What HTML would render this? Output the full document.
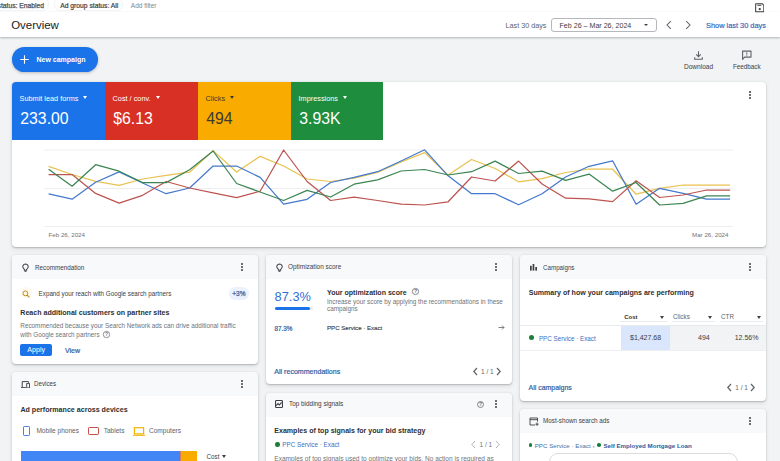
<!DOCTYPE html>
<html><head><meta charset="utf-8">
<style>
*{box-sizing:border-box;margin:0;padding:0}
html,body{width:780px;height:461px;overflow:hidden}
body{background:#f1f3f4;font-family:"Liberation Sans",sans-serif;color:#3c4043;position:relative}
.a{position:absolute;white-space:nowrap;line-height:1}
.card{position:absolute;background:#fff;border-radius:4px;box-shadow:0 1px 1.5px rgba(60,64,67,.25),0 1.5px 4px rgba(60,64,67,.12),0 0 1px rgba(60,64,67,.12);overflow:hidden}
.ch{position:absolute;left:0;top:0;width:100%;background:#f8f9fa}
.kebab{position:absolute;width:2px;height:8px}
.kebab i{position:absolute;left:0;width:2px;height:2px;border-radius:1px;background:#3c4043}
.tile{position:absolute;top:0;height:58.3px}
.tri{display:inline-block;width:0;height:0;border-left:2.6px solid transparent;border-right:2.6px solid transparent;border-top:3px solid currentColor;vertical-align:middle;margin-left:5px;position:relative;top:-1px}
</style></head><body>

<div class="a" style="left:0;top:0;width:780px;height:12px;background:#fff"></div>
<div class="a" style="left:-20px;top:-2px;width:69px;height:13px;border:1px solid #f1f3f4;border-radius:6px"></div>
<div class="a" style="left:53.7px;top:-2px;width:69.5px;height:13px;border:1px solid #f1f3f4;border-radius:6px"></div>
<div class="a" style="left:-2.5px;top:3.09px;font-size:6.75px;color:#4d5156;font-weight:normal;-webkit-text-stroke:0.25px #4d5156">status: Enabled</div>
<div class="a" style="left:60.2px;top:3.09px;font-size:6.75px;color:#3c4043;font-weight:normal;-webkit-text-stroke:0.2px #3c4043">Ad group status: All</div>
<div class="a" style="left:130.8px;top:3.21px;font-size:6.50px;color:#80868b;font-weight:normal;">Add filter</div>
<svg class="a" style="left:754.9px;top:3px;z-index:2" width="9.5" height="9.5" viewBox="0 0 10 10"><path d="M0.7 0.7 H7.6 L9.3 2.4 V9.3 H0.7 Z" stroke="#3c4043" stroke-width="1.1" fill="none" stroke-linejoin="round"/><path d="M2.6 2.4 H6.6" stroke="#3c4043" stroke-width="1.1"/><circle cx="5" cy="6.4" r="1.2" fill="#3c4043"/></svg>
<div class="a" style="left:0;top:12px;width:780px;height:25px;background:#fff;box-shadow:0 1px 2px rgba(60,64,67,.35)"></div>
<div class="a" style="left:11.2px;top:19.99px;font-size:11.45px;color:#202124;font-weight:normal;">Overview</div>
<div class="a" style="left:505.6px;top:22.47px;font-size:7.20px;color:#5f6368;font-weight:normal;">Last 30 days</div>
<div class="a" style="left:550.6px;top:18.2px;width:106px;height:13.8px;border:1px solid #b4b8bc;border-radius:3px"></div>
<div class="a" style="left:559.5px;top:22.52px;font-size:7.10px;color:#3c4043;font-weight:normal;">Feb 26 – Mar 26, 2024</div>
<div class="a" style="left:643.5px;top:24px;width:0;height:0;border-left:2.5px solid transparent;border-right:2.5px solid transparent;border-top:2.5px solid #3c4043"></div>
<svg class="a" style="left:664px;top:19.5px" width="9" height="10" viewBox="0 0 9 10"><path d="M6.8 1.2 L3 5 L6.8 8.8" stroke="#5f6368" stroke-width="1.05" fill="none"/></svg>
<svg class="a" style="left:684px;top:19.5px" width="9" height="10" viewBox="0 0 9 10"><path d="M2.2 1.2 L6 5 L2.2 8.8" stroke="#5f6368" stroke-width="1.05" fill="none"/></svg>
<div class="a" style="left:706.0px;top:22.37px;font-size:7.40px;color:#2b63b8;font-weight:normal;-webkit-text-stroke:0.15px #2b63b8;">Show last 30 days</div>
<div class="a" style="left:12px;top:47.3px;width:86px;height:24.6px;border-radius:12.3px;background:#1a73e8;box-shadow:0 1px 3px rgba(60,64,67,.3)"></div>
<svg class="a" style="left:19.5px;top:54.5px" width="9" height="9" viewBox="0 0 9 9"><path d="M4.5 0.3V8.7M0.3 4.5H8.7" stroke="#fff" stroke-width="1.1"/></svg>
<div class="a" style="left:36.5px;top:56.07px;font-size:7.00px;color:#fff;font-weight:bold;">New campaign</div>
<svg class="a" style="left:694px;top:50.5px" width="9" height="9" viewBox="0 0 9 9"><path d="M4.5 0.3 V5.6 M2.2 3.4 L4.5 5.7 L6.8 3.4" stroke="#5f6368" stroke-width="1.1" fill="none"/><path d="M0.7 6.3 V8.2 H8.3 V6.3" stroke="#5f6368" stroke-width="1.1" fill="none"/></svg>
<div class="a" style="left:684.0px;top:64.09px;font-size:6.55px;color:#3c4043;font-weight:normal;">Download</div>
<svg class="a" style="left:741.3px;top:49.8px" width="11" height="10" viewBox="0 0 11 10"><path d="M1.6 9.3 V1.1 H10 V7.1 H3.6 Z" stroke="#5f6368" stroke-width="1.1" fill="none" stroke-linejoin="round"/><path d="M5.8 2.4 V4.6 M5.8 5.4 V6.2" stroke="#5f6368" stroke-width="1"/></svg>
<div class="a" style="left:733.0px;top:64.21px;font-size:6.30px;color:#3c4043;font-weight:normal;">Feedback</div>
<div class="card" style="left:12px;top:81.5px;width:754px;height:165.7px">
<div class="tile" style="left:0px;width:93px;background:#1a73e8"></div>
<div class="a" style="left:7.6px;top:13.42px;font-size:7.30px;color:#fff;font-weight:normal;">Submit lead forms<span class="tri"></span></div>
<div class="a" style="left:8.3px;top:29.86px;font-size:15.80px;color:#fff;font-weight:normal;">233.00</div>
<div class="tile" style="left:93px;width:93px;background:#d93025"></div>
<div class="a" style="left:100.6px;top:13.42px;font-size:7.30px;color:#fff;font-weight:normal;">Cost / conv.<span class="tri"></span></div>
<div class="a" style="left:101.3px;top:29.86px;font-size:15.80px;color:#fff;font-weight:normal;">$6.13</div>
<div class="tile" style="left:186px;width:93px;background:#f9ab00"></div>
<div class="a" style="left:193.6px;top:13.42px;font-size:7.30px;color:#3c3a33;font-weight:normal;">Clicks<span class="tri"></span></div>
<div class="a" style="left:194.3px;top:29.86px;font-size:15.80px;color:#3c3a33;font-weight:normal;">494</div>
<div class="tile" style="left:279px;width:92px;background:#1e8e3e"></div>
<div class="a" style="left:286.6px;top:13.42px;font-size:7.30px;color:#fff;font-weight:normal;">Impressions<span class="tri"></span></div>
<div class="a" style="left:287.3px;top:29.86px;font-size:15.80px;color:#fff;font-weight:normal;">3.93K</div>
<div class="kebab" style="left:737.0px;top:9.0px"><i style="top:0"></i><i style="top:3px"></i><i style="top:6px"></i></div>
<div class="a" style="left:36.5px;top:150.46px;font-size:6.20px;color:#6f7377;font-weight:normal;">Feb 26, 2024</div>
<div class="a" style="left:680.0px;top:150.46px;font-size:6.20px;color:#6f7377;font-weight:normal;">Mar 26, 2024</div>
</div>
<svg class="a" style="left:0;top:0" width="780" height="461"><path d="M44 150H733M44 188.5H733M44 226.5H733" stroke="#eceef0" stroke-width="1" fill="none"/>
<polyline points="48.6,166.4 72.1,174.5 95.6,181.4 119.1,185.3 142.6,179.0 166.1,175.4 189.6,172.2 213.1,150.6 236.6,172.0 260.1,156.3 283.6,166.0 307.1,179.0 330.6,181.5 354.1,178.2 377.6,172.5 401.1,162.0 424.6,152.6 448.1,175.0 471.6,159.5 495.1,168.5 518.6,181.8 542.1,178.7 565.6,172.5 589.1,169.0 612.6,169.2 636.1,194.2 659.6,188.3 683.1,185.0 706.6,185.0 730.1,185.0" stroke="#e9c24f" stroke-width="1.25" fill="none" stroke-linejoin="round"/>
<polyline points="48.6,193.8 72.1,199.2 95.6,182.3 119.1,171.9 142.6,183.0 166.1,193.7 189.6,188.0 213.1,166.0 236.6,166.0 260.1,177.4 283.6,204.2 307.1,199.3 330.6,182.5 354.1,177.4 377.6,171.7 401.1,161.0 424.6,149.8 448.1,175.8 471.6,193.7 495.1,193.7 518.6,204.8 542.1,193.7 565.6,177.0 589.1,166.3 612.6,160.8 636.1,204.2 659.6,188.3 683.1,193.3 706.6,199.2 730.1,199.2" stroke="#4479cc" stroke-width="1.25" fill="none" stroke-linejoin="round"/>
<polyline points="48.6,174.5 72.1,174.5 95.6,193.4 119.1,203.2 142.6,195.3 166.1,181.5 189.6,188.0 213.1,192.8 236.6,197.7 260.1,191.2 283.6,150.0 307.1,181.5 330.6,200.5 354.1,197.2 377.6,200.5 401.1,204.2 424.6,205.0 448.1,201.8 471.6,177.0 495.1,181.0 518.6,161.1 542.1,184.0 565.6,198.2 589.1,198.9 612.6,201.6 636.1,180.8 659.6,197.5 683.1,195.0 706.6,190.0 730.1,190.0" stroke="#bd5450" stroke-width="1.25" fill="none" stroke-linejoin="round"/>
<polyline points="48.6,169.3 72.1,186.2 95.6,164.7 119.1,171.2 142.6,182.5 166.1,182.6 189.6,169.8 213.1,151.0 236.6,183.5 260.1,192.0 283.6,200.5 307.1,190.4 330.6,197.0 354.1,184.2 377.6,179.8 401.1,171.0 424.6,169.5 448.1,175.0 471.6,171.7 495.1,161.1 518.6,173.5 542.1,171.2 565.6,180.3 589.1,174.1 612.6,191.2 636.1,182.5 659.6,205.0 683.1,203.3 706.6,195.8 730.1,195.8" stroke="#3c8552" stroke-width="1.25" fill="none" stroke-linejoin="round"/>
</svg>
<div class="card" style="left:12px;top:255.1px;width:246px;height:108.6px"><div class="ch" style="height:24.3px"></div></div>
<svg class="a" style="left:21.8px;top:263.1px" width="7" height="9" viewBox="0 0 8 10"><path d="M4 0.9 A3.1 3.1 0 0 0 1.8 6.1 L2.7 7.1 V8.1 H5.3 V7.1 L6.2 6.1 A3.1 3.1 0 0 0 4 0.9 Z" stroke="#3c4043" stroke-width="1.15" fill="none"/><path d="M2.9 9.4 H5.1" stroke="#3c4043" stroke-width="1.1"/></svg>
<div class="a" style="left:34.5px;top:264.64px;font-size:6.74px;color:#3c4043;font-weight:normal;transform:scaleX(0.9346);transform-origin:0 0;">Recommendation</div>
<div class="kebab" style="left:241.0px;top:263.0px"><i style="top:0"></i><i style="top:3px"></i><i style="top:6px"></i></div>
<div class="a" style="left:20.5px;top:287px;width:11px;height:11px;border-radius:50%;background:#fef9ec"></div>
<svg class="a" style="left:22.3px;top:289.6px" width="8" height="8" viewBox="0 0 9 9"><circle cx="3.8" cy="3.8" r="2.7" stroke="#c08a1e" stroke-width="1.1" fill="none"/><path d="M5.8 5.8 L8.3 8.3" stroke="#c08a1e" stroke-width="1.2"/></svg>
<div class="a" style="left:38.6px;top:291.02px;font-size:6.28px;color:#3c4043;font-weight:normal;">Expand your reach with Google search partners</div>
<div class="a" style="left:228.6px;top:287px;width:20px;height:12.8px;border-radius:6.4px;background:#ebf1fd"></div>
<div class="a" style="left:232.3px;top:291.01px;font-size:6.50px;color:#3d5f94;font-weight:normal;-webkit-text-stroke:0.25px #3d5f94;">+3%</div>
<div class="a" style="left:20.3px;top:309.34px;font-size:7.07px;color:#2d3033;font-weight:bold;">Reach additional customers on partner sites</div>
<div class="a" style="left:20.3px;top:323.39px;font-size:6.35px;color:#6f7377;font-weight:normal;">Recommended because your Search Network ads can drive additional traffic</div>
<div class="a" style="left:20.3px;top:331.79px;font-size:6.35px;color:#6f7377;font-weight:normal;">with Google search partners</div>
<svg class="a" style="left:101.5px;top:329.7px" width="9" height="9" viewBox="0 0 9 9"><circle cx="4.5" cy="4.5" r="3.2" stroke="#6f7377" stroke-width="0.75" fill="none"/><text x="4.5" y="6.3" text-anchor="middle" font-family="Liberation Sans" font-weight="bold" font-size="5" fill="#6f7377">?</text></svg>
<div class="a" style="left:20.3px;top:344px;width:32.1px;height:11.7px;border-radius:2px;background:#1a73e8"></div>
<div class="a" style="left:27.3px;top:347.32px;font-size:7.10px;color:#fff;font-weight:normal;">Apply</div>
<div class="a" style="left:65.0px;top:347.37px;font-size:7.00px;color:#34609f;font-weight:normal;-webkit-text-stroke:0.2px #34609f;">View</div>
<div class="card" style="left:12px;top:371.5px;width:246px;height:100px"><div class="ch" style="height:24.3px"></div></div>
<svg class="a" style="left:20.8px;top:380.6px" width="9" height="7.4" viewBox="0 0 9 7.4"><path d="M1.2 6.4 V0.6 H7.6 V1.8" stroke="#3c4043" stroke-width="1" fill="none"/><path d="M0 6.7 H5" stroke="#3c4043" stroke-width="1.1"/><rect x="5.7" y="2.6" width="2.8" height="4.3" stroke="#3c4043" stroke-width="0.9" fill="none"/></svg>
<div class="a" style="left:34.3px;top:381.39px;font-size:6.63px;color:#3c4043;font-weight:normal;transform:scaleX(0.9346);transform-origin:0 0;">Devices</div>
<div class="kebab" style="left:241.2px;top:380.4px"><i style="top:0"></i><i style="top:3px"></i><i style="top:6px"></i></div>
<div class="a" style="left:20.4px;top:406.52px;font-size:7.10px;color:#2d3033;font-weight:bold;">Ad performance across devices</div>
<div class="a" style="left:23px;top:426px;width:7px;height:9.7px;border:1.3px solid #4a80d9;border-radius:1.2px"></div>
<div class="a" style="left:36.4px;top:428.19px;font-size:6.55px;color:#5f6368;font-weight:normal;">Mobile phones</div>
<div class="a" style="left:88.4px;top:427px;width:10.9px;height:7.7px;border:1.3px solid #c9504a;border-radius:1.2px"></div>
<div class="a" style="left:103.7px;top:428.19px;font-size:6.55px;color:#5f6368;font-weight:normal;">Tablets</div>
<svg class="a" style="left:133px;top:426.5px" width="12" height="9" viewBox="0 0 12 9"><rect x="1.4" y="0.7" width="9.2" height="6.2" stroke="#f0b400" stroke-width="1.2" fill="none"/><path d="M0 8.3 H12" stroke="#f0b400" stroke-width="1.1"/></svg>
<div class="a" style="left:149.0px;top:428.19px;font-size:6.55px;color:#5f6368;font-weight:normal;">Computers</div>
<div class="a" style="left:21px;top:450.8px;width:158.6px;height:12px;background:#4285f4"></div>
<div class="a" style="left:179.6px;top:451px;width:1.1px;height:12px;background:#d47a62"></div>
<div class="a" style="left:180.7px;top:450.8px;width:16px;height:12px;background:#f9ab00"></div>
<div class="a" style="left:206.5px;top:453.91px;font-size:6.30px;color:#3c4043;font-weight:normal;">Cost<span class="tri" style="margin-left:3px"></span></div>
<div class="card" style="left:266.1px;top:255.1px;width:245.7px;height:129px"><div class="ch" style="height:24.3px"></div></div>
<svg class="a" style="left:276.0px;top:263.0px" width="7" height="9" viewBox="0 0 8 10"><path d="M4 0.9 A3.1 3.1 0 0 0 1.8 6.1 L2.7 7.1 V8.1 H5.3 V7.1 L6.2 6.1 A3.1 3.1 0 0 0 4 0.9 Z" stroke="#3c4043" stroke-width="1.15" fill="none"/><path d="M2.9 9.4 H5.1" stroke="#3c4043" stroke-width="1.1"/></svg>
<div class="a" style="left:288.3px;top:263.67px;font-size:6.88px;color:#3c4043;font-weight:normal;transform:scaleX(0.9346);transform-origin:0 0;">Optimization score</div>
<div class="kebab" style="left:495.2px;top:263.2px"><i style="top:0"></i><i style="top:3px"></i><i style="top:6px"></i></div>
<div class="a" style="left:274.6px;top:290.53px;font-size:12.80px;color:#2f6fd6;font-weight:normal;">87.3%</div>
<div class="a" style="left:274.6px;top:307px;width:38px;height:3px;border-radius:1.5px;background:#e8eaed"></div>
<div class="a" style="left:274.6px;top:307px;width:35.4px;height:3px;border-radius:1.5px;background:#1a73e8"></div>
<div class="a" style="left:327.0px;top:288.75px;font-size:7.05px;color:#2d3033;font-weight:bold;">Your optimization score</div>
<svg class="a" style="left:411.0px;top:287.0px" width="9" height="9" viewBox="0 0 9 9"><circle cx="4.5" cy="4.5" r="3.1" stroke="#5f6368" stroke-width="0.75" fill="none"/><text x="4.5" y="6.3" text-anchor="middle" font-family="Liberation Sans" font-weight="bold" font-size="5" fill="#5f6368">?</text></svg>
<div class="a" style="left:327.0px;top:298.50px;font-size:6.33px;color:#6f7377;font-weight:normal;">Increase your score by applying the recommendations in these</div>
<div class="a" style="left:327.0px;top:306.40px;font-size:6.33px;color:#6f7377;font-weight:normal;">campaigns</div>
<div class="a" style="left:274.6px;top:325.91px;font-size:6.30px;color:#34609f;font-weight:normal;-webkit-text-stroke:0.2px #34609f;">87.3%</div>
<div class="a" style="left:327.0px;top:324.61px;font-size:6.10px;color:#3c4043;font-weight:normal;-webkit-text-stroke:0.15px #3c4043;">PPC Service · Exact</div>
<svg class="a" style="left:497.5px;top:323.9px" width="7" height="7" viewBox="0 0 7 7"><path d="M0.5 3.5 H6 M4 1.5 L6 3.5 L4 5.5" stroke="#5f6368" stroke-width="0.8" fill="none"/></svg>
<div class="a" style="left:274.3px;top:368.34px;font-size:7.07px;color:#34609f;font-weight:normal;-webkit-text-stroke:0.2px #34609f;">All recommendations</div>
<svg class="a" style="left:471.5px;top:366.5px" width="7" height="9" viewBox="0 0 7 9"><path d="M5 1 L1.8 4.5 L5 8" stroke="#5f6368" stroke-width="1.2" fill="none"/></svg><div class="a" style="left:481.0px;top:368.62px;font-size:6.50px;color:#5f6368;font-weight:normal;">1 / 1</div><svg class="a" style="left:495.0px;top:366.5px" width="7" height="9" viewBox="0 0 7 9"><path d="M2 1 L5.2 4.5 L2 8" stroke="#5f6368" stroke-width="1.2" fill="none"/></svg>
<div class="card" style="left:266.1px;top:392.9px;width:245.7px;height:100px"><div class="ch" style="height:24.3px"></div></div>
<svg class="a" style="left:275.2px;top:400.3px" width="8" height="8" viewBox="0 0 8 8"><rect x="0.55" y="0.55" width="6.9" height="6.9" rx="0.8" stroke="#3c4043" stroke-width="1.1" fill="none"/><path d="M1.2 5.6 L3 3.6 L4.4 4.9 L6.6 2.3" stroke="#3c4043" stroke-width="1.1" fill="none"/></svg>
<div class="a" style="left:289.0px;top:401.30px;font-size:6.83px;color:#3c4043;font-weight:normal;transform:scaleX(0.9346);transform-origin:0 0;">Top bidding signals</div>
<svg class="a" style="left:475.5px;top:399.5px" width="9" height="9" viewBox="0 0 9 9"><circle cx="4.5" cy="4.5" r="3" stroke="#5f6368" stroke-width="0.75" fill="none"/><text x="4.5" y="6.3" text-anchor="middle" font-family="Liberation Sans" font-weight="bold" font-size="5" fill="#5f6368">?</text></svg>
<div class="kebab" style="left:495.0px;top:400.0px"><i style="top:0"></i><i style="top:3px"></i><i style="top:6px"></i></div>
<div class="a" style="left:274.3px;top:426.64px;font-size:7.06px;color:#2d3033;font-weight:bold;">Examples of top signals for your bid strategy</div>
<div class="a" style="left:275.1px;top:442px;width:4.6px;height:4.6px;border-radius:50%;background:#188038"></div>
<div class="a" style="left:282.3px;top:442.01px;font-size:6.30px;color:#3a6fbf;font-weight:normal;">PPC Service · Exact</div>
<svg class="a" style="left:470.0px;top:439.7px" width="7" height="9" viewBox="0 0 7 9"><path d="M5 1 L1.8 4.5 L5 8" stroke="#9aa0a6" stroke-width="0.8" fill="none"/></svg><div class="a" style="left:479.5px;top:441.81px;font-size:6.50px;color:#70757a;font-weight:normal;">1 / 1</div><svg class="a" style="left:493.5px;top:439.7px" width="7" height="9" viewBox="0 0 7 9"><path d="M2 1 L5.2 4.5 L2 8" stroke="#9aa0a6" stroke-width="0.8" fill="none"/></svg>
<div class="a" style="left:274.3px;top:455.89px;font-size:6.55px;color:#6f7377;font-weight:normal;">Examples of top signals used to optimize your bids. No action is required as</div>
<div class="card" style="left:520.4px;top:255.1px;width:245.6px;height:145.6px"><div class="ch" style="height:24.3px"></div></div>
<svg class="a" style="left:530px;top:264px" width="7" height="6.6" viewBox="0 0 7 6.6"><rect x="0" y="1.8" width="1.7" height="4.8" fill="#3c4043"/><rect x="2.6" y="0" width="1.7" height="6.6" fill="#3c4043"/><rect x="5.3" y="3" width="1.7" height="3.6" fill="#3c4043"/></svg>
<div class="a" style="left:542.5px;top:264.78px;font-size:6.66px;color:#3c4043;font-weight:normal;transform:scaleX(0.9346);transform-origin:0 0;">Campaigns</div>
<div class="kebab" style="left:749.0px;top:263.4px"><i style="top:0"></i><i style="top:3px"></i><i style="top:6px"></i></div>
<div class="a" style="left:528.7px;top:289.63px;font-size:7.09px;color:#2d3033;font-weight:bold;">Summary of how your campaigns are performing</div>
<div class="a" style="left:624.3px;top:314.51px;font-size:5.90px;color:#2d3033;font-weight:bold;">Cost</div>
<div class="a" style="left:659.7px;top:316.2px;width:0;height:0;border-left:2.5px solid transparent;border-right:2.5px solid transparent;border-top:3px solid #3c4043"></div>
<div class="a" style="left:673.0px;top:314.11px;font-size:6.30px;color:#5f6368;font-weight:normal;">Clicks</div>
<div class="a" style="left:708.2px;top:316.2px;width:0;height:0;border-left:2.5px solid transparent;border-right:2.5px solid transparent;border-top:3px solid #3c4043"></div>
<div class="a" style="left:721.0px;top:314.11px;font-size:6.30px;color:#5f6368;font-weight:normal;">CTR</div>
<div class="a" style="left:756.5px;top:316.2px;width:0;height:0;border-left:2.5px solid transparent;border-right:2.5px solid transparent;border-top:3px solid #3c4043"></div>
<div class="a" style="left:620px;top:321px;width:47px;height:1px;background:#e8eaed"></div>
<div class="a" style="left:672px;top:321px;width:43px;height:1px;background:#e8eaed"></div>
<div class="a" style="left:720px;top:321px;width:43px;height:1px;background:#e8eaed"></div>
<div class="a" style="left:520.4px;top:325.2px;width:245.6px;height:1px;background:#e8eaed"></div>
<div class="a" style="left:669.6px;top:325.8px;width:96.4px;height:24px;background:#f1f3f4"></div>
<div class="a" style="left:520.4px;top:349.8px;width:245.6px;height:0.8px;background:#eceef0"></div>
<div class="a" style="left:621.3px;top:325.8px;width:48.3px;height:24px;background:#d9e6fb"></div>
<div class="a" style="left:529.3px;top:335.4px;width:5px;height:5px;border-radius:50%;background:#188038"></div>
<div class="a" style="left:538.9px;top:335.63px;font-size:6.27px;color:#3a6fbf;font-weight:normal;">PPC Service · Exact</div>
<div class="a" style="left:630.0px;top:334.37px;font-size:7.00px;color:#3c4043;font-weight:normal;">$1,427.68</div>
<div class="a" style="right:70.3px;top:334.37px;font-size:7.00px;color:#3c4043;font-weight:normal;">494</div>
<div class="a" style="right:21.6px;top:334.37px;font-size:7.00px;color:#3c4043;font-weight:normal;">12.56%</div>
<div class="a" style="left:528.6px;top:385.10px;font-size:6.94px;color:#34609f;font-weight:normal;-webkit-text-stroke:0.2px #34609f;">All campaigns</div>
<svg class="a" style="left:725.8px;top:383.3px" width="7" height="9" viewBox="0 0 7 9"><path d="M5 1 L1.8 4.5 L5 8" stroke="#5f6368" stroke-width="1.2" fill="none"/></svg><div class="a" style="left:735.3px;top:385.42px;font-size:6.50px;color:#5f6368;font-weight:normal;">1 / 1</div><svg class="a" style="left:749.3px;top:383.3px" width="7" height="9" viewBox="0 0 7 9"><path d="M2 1 L5.2 4.5 L2 8" stroke="#5f6368" stroke-width="1.2" fill="none"/></svg>
<div class="card" style="left:520.4px;top:409px;width:245.6px;height:100px"><div class="ch" style="height:24.3px"></div></div>
<svg class="a" style="left:528.5px;top:416.5px" width="10" height="9" viewBox="0 0 10 9"><path d="M6 8 H1 V1 H8.5 V4.5" stroke="#3c4043" stroke-width="0.9" fill="none"/><path d="M1 2.7 H8.5" stroke="#3c4043" stroke-width="0.9"/><path d="M8 5.5 V8.8 M6.4 7.2 H9.6" stroke="#3c4043" stroke-width="0.9"/></svg>
<div class="a" style="left:542.9px;top:418.34px;font-size:6.74px;color:#3c4043;font-weight:normal;transform:scaleX(0.9346);transform-origin:0 0;">Most-shown search ads</div>
<div class="kebab" style="left:749.4px;top:417.0px"><i style="top:0"></i><i style="top:3px"></i><i style="top:6px"></i></div>
<div class="a" style="left:528.6px;top:443.3px;width:3.6px;height:3.6px;border-radius:50%;background:#188038"></div>
<div class="a" style="left:534.7px;top:442.56px;font-size:6.20px;color:#4a6f9f;font-weight:normal;">PPC Service · Exact ›</div>
<div class="a" style="left:597.3px;top:443.4px;width:3.6px;height:3.6px;border-radius:50%;background:#188038"></div>
<div class="a" style="left:603.4px;top:442.58px;font-size:6.17px;color:#2f5a9c;font-weight:bold;">Self Employed Mortgage Loan</div>
<div class="a" style="left:549px;top:452.8px;width:189px;height:30px;border:1.2px solid #dadce0;border-radius:9px"></div>
</body></html>
